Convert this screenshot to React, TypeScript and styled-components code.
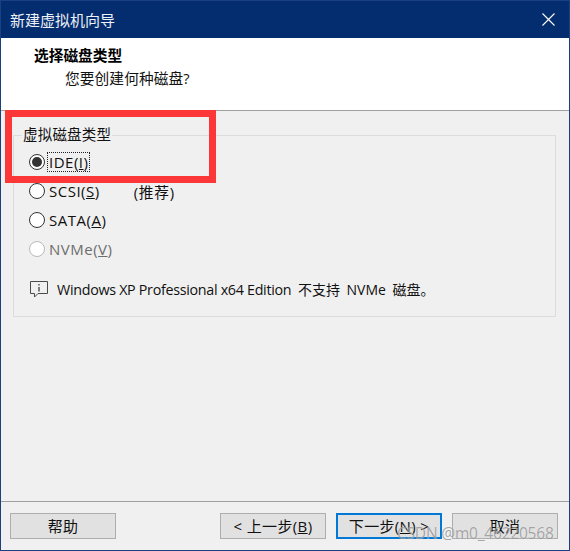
import React from "react";
import styled, { createGlobalStyle } from "styled-components";

const Global = createGlobalStyle`
  html, body { margin: 0; padding: 0; background: #f0f0f0; }
  * { box-sizing: border-box; }
`;

const FONT = `"Open Sans", "Noto Sans CJK SC", sans-serif`;

const Window = styled.div`
  position: relative;
  width: 570px;
  height: 551px;
  display: flex;
  flex-direction: column;
  background: #f0f0f0;
  border: 1px solid #1b3f80;
  font-family: ${FONT};
  font-size: 15px;
  color: #111;
  overflow: hidden;
`;

const TitleBar = styled.div`
  height: 37px;
  flex: none;
  display: flex;
  align-items: center;
  justify-content: space-between;
  padding: 0 14px 0 9px;
  background: #042d6f;
  color: #eef1f6;
  font-size: 15px;
`;

const CloseIcon = styled.svg`
  width: 13px;
  height: 13px;
  display: block;
`;

const Header = styled.div`
  height: 73px;
  flex: none;
  background: #fff;
  border-bottom: 1px solid #a0a0a0;
  padding: 8px 0 0 33px;
`;

const Heading = styled.div`
  font-weight: 700;
  font-size: 14.7px;
  line-height: 19px;
  color: #000;
`;

const SubHeading = styled.div`
  margin: 3px 0 0 31px;
  font-size: 14.7px;
  line-height: 20px;
  letter-spacing: 0.1px;
`;

const Body = styled.div`
  flex: 1;
  padding: 14px 13px 0 12px;
`;

const Group = styled.fieldset`
  margin: 0;
  padding: 7px 0 0 15px;
  height: 192px;
  border: 1px solid #dcdcdc;
  min-width: 0;
`;

const Legend = styled.legend`
  margin-left: -7px;
  padding: 0 1px;
  font-size: 14.5px;
  line-height: 20px;
  letter-spacing: 0.2px;
`;

const Options = styled.div`
  display: flex;
  flex-direction: column;
  gap: 9px;
`;

const Option = styled.label<{ $disabled?: boolean }>`
  display: flex;
  align-items: center;
  height: 20px;
  color: ${(p) => (p.$disabled ? "#6d6d6d" : "#111")};
`;

const Radio = styled.span<{ $checked?: boolean; $disabled?: boolean }>`
  width: 16px;
  height: 16px;
  flex: none;
  border-radius: 50%;
  border: 1px solid ${(p) => (p.$disabled ? "#b9b9b9" : "#333")};
  background: #fff;
  display: flex;
  align-items: center;
  justify-content: center;
  margin-right: 3px;
  &::after {
    content: "";
    display: ${(p) => (p.$checked ? "block" : "none")};
    width: 10px;
    height: 10px;
    border-radius: 50%;
    background: #333;
  }
`;

const LabelText = styled.span<{ $focused?: boolean }>`
  padding: 0 1px;
  line-height: 18px;
  letter-spacing: 0.5px;
  outline: ${(p) => (p.$focused ? "1px dotted #222" : "none")};
  outline-offset: 0;
`;

const Hint = styled.span`
  margin-left: 33px;
  font-size: 14.7px;
  letter-spacing: 0.8px;
`;

const Note = styled.div`
  display: flex;
  align-items: center;
  margin: 20px 0 0 1px;
  height: 20px;
`;

const NoteIcon = styled.svg`
  width: 18px;
  height: 18px;
  flex: none;
  margin-right: 9px;
`;

const NoteLatin = styled.span`
  font-size: 14.3px;
  letter-spacing: -0.3px;
  white-space: pre;
`;

const NoteRest = styled.span`
  font-size: 14px;
  word-spacing: 3px;
  white-space: pre;
`;

const Footer = styled.div`
  height: 49px;
  flex: none;
  border-top: 1px solid #a0a0a0;
  padding: 11px 11px 0 9px;
  display: flex;
  align-items: flex-start;
`;

const Button = styled.button<{ $primary?: boolean }>`
  width: 106px;
  height: 26px;
  padding: 0;
  background: #e1e1e1;
  border: ${(p) => (p.$primary ? "2px solid #0078d7" : "1px solid #adadad")};
  font: inherit;
  font-size: 15px;
  letter-spacing: 0.35px;
  color: #111;
  line-height: 20px;
  margin-left: 10px;
  &:first-child {
    margin: 0 94px 0 0;
  }
`;

const RedBox = styled.div`
  position: absolute;
  left: 4px;
  top: 109px;
  width: 211px;
  height: 73px;
  border: 7px solid #fc3737;
  pointer-events: none;
`;

const Watermark = styled.div`
  position: absolute;
  left: 396px;
  top: 522px;
  font-size: 15.5px;
  line-height: 20px;
  color: rgba(125, 125, 125, 0.68);
  text-shadow: 0 0 1px rgba(255, 255, 255, 0.6);
  white-space: nowrap;
  letter-spacing: -0.2px;
  pointer-events: none;
`;

export default function App() {
  return (
    <>
      <Global />
      <Window>
        <TitleBar>
          <span>新建虚拟机向导</span>
          <CloseIcon viewBox="0 0 13 13">
            <path d="M0.5 0.5 L12.5 12.5 M12.5 0.5 L0.5 12.5" stroke="#fff" strokeWidth="1.1" fill="none" />
          </CloseIcon>
        </TitleBar>
        <Header>
          <Heading>选择磁盘类型</Heading>
          <SubHeading>您要创建何种磁盘?</SubHeading>
        </Header>
        <Body>
          <Group>
            <Legend>虚拟磁盘类型</Legend>
            <Options>
              <Option>
                <Radio $checked />
                <LabelText $focused>
                  IDE(<u>I</u>)
                </LabelText>
              </Option>
              <Option>
                <Radio />
                <LabelText>
                  SCSI(<u>S</u>)
                </LabelText>
                <Hint>(推荐)</Hint>
              </Option>
              <Option>
                <Radio />
                <LabelText>
                  SATA(<u>A</u>)
                </LabelText>
              </Option>
              <Option $disabled>
                <Radio $disabled />
                <LabelText>
                  NVMe(<u>V</u>)
                </LabelText>
              </Option>
            </Options>
            <Note>
              <NoteIcon viewBox="0 0 18 18">
                <path
                  d="M0.5 1.5 H17.5 V13.5 H8 L4.5 17 V13.5 H0.5 Z"
                  fill="none"
                  stroke="#4a4a4a"
                  strokeWidth="1"
                />
                <path d="M9 4 V5.5 M9 7 V11.5" stroke="#333" strokeWidth="1.2" fill="none" />
              </NoteIcon>
              <NoteLatin>Windows XP Professional x64 Edition</NoteLatin>
              <NoteRest> 不支持 NVMe 磁盘。</NoteRest>
            </Note>
          </Group>
        </Body>
        <Footer>
          <Button>帮助</Button>
          <Button>
            &lt; 上一步(<u>B</u>)
          </Button>
          <Button $primary>
            下一步(<u>N</u>) &gt;
          </Button>
          <Button>取消</Button>
        </Footer>
        <RedBox />
        <Watermark>CSDN @m0_46220568</Watermark>
      </Window>
    </>
  );
}
